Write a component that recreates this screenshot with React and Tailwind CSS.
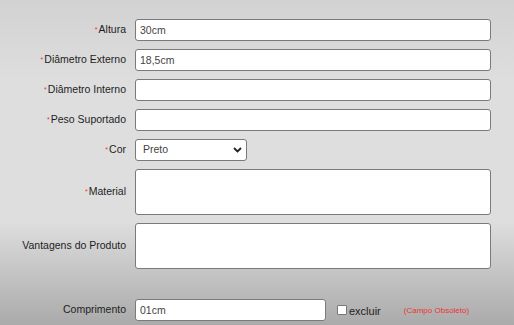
import React from 'react'

// ── Ficha técnica do produto ────────────────────────────────────────────────

const inputCls =
  'block h-[22px] rounded-[3px] border border-[#7a7a7a] bg-white px-[4px] text-[10.5px] text-[#444] outline-none'

function Label({ required, children, className = '' }) {
  return (
    <div className={`w-[126px] shrink-0 text-right text-[10.5px] text-[#1e1e1e] ${className}`}>
      {required && <span className="mr-px align-[1px] text-[7px] text-[#e33]">*</span>}
      {children}
    </div>
  )
}

function Row({ children }) {
  return <div className="flex items-center gap-[9px]">{children}</div>
}

export default function App() {
  const fields = [
    { label: 'Altura', value: '30cm' },
    { label: 'Diâmetro Externo', value: '18,5cm' },
    { label: 'Diâmetro Interno', value: '' },
    { label: 'Peso Suportado', value: '' },
  ]

  return (
    <div
      className="h-[325px] w-[514px] overflow-hidden bg-[linear-gradient(180deg,#d2d2d2_0%,#dedede_25%,#dedede_68%,#aaaaaa_100%)] pt-[19px]"
      style={{ fontFamily: '"Liberation Sans", Arial, sans-serif' }}
    >
      <div className="flex flex-col gap-[8px]">
        {fields.map(f => (
          <Row key={f.label}>
            <Label required>{f.label}</Label>
            <input className={`${inputCls} w-[356px]`} defaultValue={f.value} />
          </Row>
        ))}

        <Row>
          <Label required>Cor</Label>
          <div className="relative h-[22px]">
            <select
              className="block h-[22px] w-[112px] appearance-none rounded-[3px] border border-[#7a7a7a] bg-white pl-[7px] text-[10.5px] text-[#444] outline-none"
              defaultValue="Preto"
            >
              <option>Preto</option>
              <option>Branco</option>
            </select>
            <svg
              className="pointer-events-none absolute right-[5px] top-[8px]"
              width="9"
              height="6"
              viewBox="0 0 9 6"
            >
              <path d="M1 1l3.5 3.5L8 1" fill="none" stroke="#222" strokeWidth="1.8" />
            </svg>
          </div>
        </Row>

        <Row>
          <Label required>Material</Label>
          <textarea className={`${inputCls} h-[46px] w-[356px] resize-none`} />
        </Row>

        <Row>
          <Label>Vantagens do Produto</Label>
          <textarea className={`${inputCls} h-[46px] w-[356px] resize-none`} />
        </Row>
      </div>

      <div className="mt-[30px] flex items-center">
        <Label>Comprimento</Label>
        <input className={`${inputCls} ml-[9px] w-[191px]`} defaultValue="01cm" />
        <label className="ml-[11px] flex items-center text-[11px] text-[#222]">
          <input
            type="checkbox"
            className="m-0 mr-[2px] h-[10px] w-[10px] appearance-none rounded-[1px] border border-[#777] bg-white"
          />
          <span className="mt-[2px]">excluir</span>
        </label>
        <span className="ml-[23px] mt-[1px] text-[8px] text-[#e33]">(Campo Obsoleto)</span>
      </div>
    </div>
  )
}
